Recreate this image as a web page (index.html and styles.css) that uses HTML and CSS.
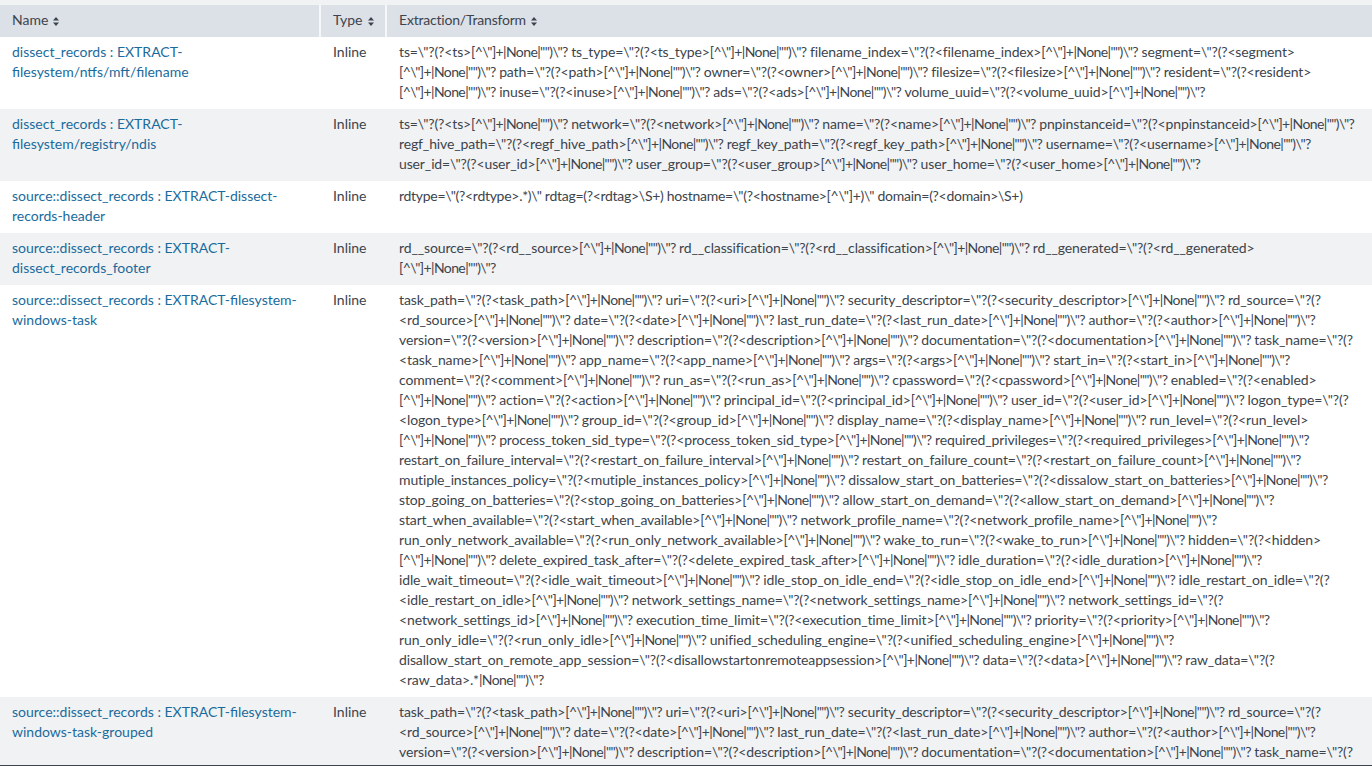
FILE: index.html
```html
<!DOCTYPE html>
<html lang="en">
<head>
<meta charset="utf-8">
<title>Extractions</title>
<link rel="stylesheet" href="styles.css">
</head>
<body>
<table class="fields">
<colgroup><col class="col-name"><col class="col-type"><col class="col-expr"></colgroup>
<thead>
<tr>
<th>Name<svg class="sort" viewBox="0 0 6 9" width="6" height="9"><path d="M3 0 6 3.6H0zM3 9 0 5.4h6z"/></svg></th>
<th>Type<svg class="sort" viewBox="0 0 6 9" width="6" height="9"><path d="M3 0 6 3.6H0zM3 9 0 5.4h6z"/></svg></th>
<th class="expr-head">Extraction/Transform<svg class="sort" viewBox="0 0 6 9" width="6" height="9"><path d="M3 0 6 3.6H0zM3 9 0 5.4h6z"/></svg></th>
</tr>
</thead>
<tbody>
<tr>
<td><a href="#">dissect_records : EXTRACT-<br>filesystem/ntfs/mft/filename</a></td>
<td>Inline</td>
<td class="expr">ts=\"?(?&lt;ts&gt;<span class="alt">[^\"]+|None|"")\"?</span> ts_type=\"?(?&lt;ts_type&gt;<span class="alt">[^\"]+|None|"")\"?</span> filename_index=\"?(?&lt;filename_index&gt;<span class="alt">[^\"]+|None|"")\"?</span> segment=\"?(?&lt;segment&gt;<br>
<span class="alt">[^\"]+|None|"")\"?</span> path=\"?(?&lt;path&gt;<span class="alt">[^\"]+|None|"")\"?</span> owner=\"?(?&lt;owner&gt;<span class="alt">[^\"]+|None|"")\"?</span> filesize=\"?(?&lt;filesize&gt;<span class="alt">[^\"]+|None|"")\"?</span> resident=\"?(?&lt;resident&gt;<br>
<span class="alt">[^\"]+|None|"")\"?</span> inuse=\"?(?&lt;inuse&gt;<span class="alt">[^\"]+|None|"")\"?</span> ads=\"?(?&lt;ads&gt;<span class="alt">[^\"]+|None|"")\"?</span> volume_uuid=\"?(?&lt;volume_uuid&gt;<span class="alt">[^\"]+|None|"")\"?</span></td>
</tr>
<tr>
<td><a href="#">dissect_records : EXTRACT-<br>filesystem/registry/ndis</a></td>
<td>Inline</td>
<td class="expr">ts=\"?(?&lt;ts&gt;<span class="alt">[^\"]+|None|"")\"?</span> network=\"?(?&lt;network&gt;<span class="alt">[^\"]+|None|"")\"?</span> name=\"?(?&lt;name&gt;<span class="alt">[^\"]+|None|"")\"?</span> pnpinstanceid=\"?(?&lt;pnpinstanceid&gt;<span class="alt">[^\"]+|None|"")\"?</span><br>
regf_hive_path=\"?(?&lt;regf_hive_path&gt;<span class="alt">[^\"]+|None|"")\"?</span> regf_key_path=\"?(?&lt;regf_key_path&gt;<span class="alt">[^\"]+|None|"")\"?</span> username=\"?(?&lt;username&gt;<span class="alt">[^\"]+|None|"")\"?</span><br>
user_id=\"?(?&lt;user_id&gt;<span class="alt">[^\"]+|None|"")\"?</span> user_group=\"?(?&lt;user_group&gt;<span class="alt">[^\"]+|None|"")\"?</span> user_home=\"?(?&lt;user_home&gt;<span class="alt">[^\"]+|None|"")\"?</span></td>
</tr>
<tr>
<td><a href="#">source::dissect_records : EXTRACT-dissect-<br>records-header</a></td>
<td>Inline</td>
<td class="expr tight">rdtype=\"(?&lt;rdtype&gt;.*)\" rdtag=(?&lt;rdtag&gt;\S+) hostname=\"(?&lt;hostname&gt;[^\"]+)\" domain=(?&lt;domain&gt;\S+)</td>
</tr>
<tr>
<td><a href="#">source::dissect_records : EXTRACT-<br>dissect_records_footer</a></td>
<td>Inline</td>
<td class="expr">rd__source=\"?(?&lt;rd__source&gt;<span class="alt">[^\"]+|None|"")\"?</span> rd__classification=\"?(?&lt;rd__classification&gt;<span class="alt">[^\"]+|None|"")\"?</span> rd__generated=\"?(?&lt;rd__generated&gt;<br>
<span class="alt">[^\"]+|None|"")\"?</span></td>
</tr>
<tr>
<td><a href="#">source::dissect_records : EXTRACT-filesystem-<br>windows-task</a></td>
<td>Inline</td>
<td class="expr">task_path=\"?(?&lt;task_path&gt;<span class="alt">[^\"]+|None|"")\"?</span> uri=\"?(?&lt;uri&gt;<span class="alt">[^\"]+|None|"")\"?</span> security_descriptor=\"?(?&lt;security_descriptor&gt;<span class="alt">[^\"]+|None|"")\"?</span> rd_source=\"?(?<br>
&lt;rd_source&gt;<span class="alt">[^\"]+|None|"")\"?</span> date=\"?(?&lt;date&gt;<span class="alt">[^\"]+|None|"")\"?</span> last_run_date=\"?(?&lt;last_run_date&gt;<span class="alt">[^\"]+|None|"")\"?</span> author=\"?(?&lt;author&gt;<span class="alt">[^\"]+|None|"")\"?</span><br>
version=\"?(?&lt;version&gt;<span class="alt">[^\"]+|None|"")\"?</span> description=\"?(?&lt;description&gt;<span class="alt">[^\"]+|None|"")\"?</span> documentation=\"?(?&lt;documentation&gt;<span class="alt">[^\"]+|None|"")\"?</span> task_name=\"?(?<br>
&lt;task_name&gt;<span class="alt">[^\"]+|None|"")\"?</span> app_name=\"?(?&lt;app_name&gt;<span class="alt">[^\"]+|None|"")\"?</span> args=\"?(?&lt;args&gt;<span class="alt">[^\"]+|None|"")\"?</span> start_in=\"?(?&lt;start_in&gt;<span class="alt">[^\"]+|None|"")\"?</span><br>
comment=\"?(?&lt;comment&gt;<span class="alt">[^\"]+|None|"")\"?</span> run_as=\"?(?&lt;run_as&gt;<span class="alt">[^\"]+|None|"")\"?</span> cpassword=\"?(?&lt;cpassword&gt;<span class="alt">[^\"]+|None|"")\"?</span> enabled=\"?(?&lt;enabled&gt;<br>
<span class="alt">[^\"]+|None|"")\"?</span> action=\"?(?&lt;action&gt;<span class="alt">[^\"]+|None|"")\"?</span> principal_id=\"?(?&lt;principal_id&gt;<span class="alt">[^\"]+|None|"")\"?</span> user_id=\"?(?&lt;user_id&gt;<span class="alt">[^\"]+|None|"")\"?</span> logon_type=\"?(?<br>
&lt;logon_type&gt;<span class="alt">[^\"]+|None|"")\"?</span> group_id=\"?(?&lt;group_id&gt;<span class="alt">[^\"]+|None|"")\"?</span> display_name=\"?(?&lt;display_name&gt;<span class="alt">[^\"]+|None|"")\"?</span> run_level=\"?(?&lt;run_level&gt;<br>
<span class="alt">[^\"]+|None|"")\"?</span> process_token_sid_type=\"?(?&lt;process_token_sid_type&gt;<span class="alt">[^\"]+|None|"")\"?</span> required_privileges=\"?(?&lt;required_privileges&gt;<span class="alt">[^\"]+|None|"")\"?</span><br>
restart_on_failure_interval=\"?(?&lt;restart_on_failure_interval&gt;<span class="alt">[^\"]+|None|"")\"?</span> restart_on_failure_count=\"?(?&lt;restart_on_failure_count&gt;<span class="alt">[^\"]+|None|"")\"?</span><br>
mutiple_instances_policy=\"?(?&lt;mutiple_instances_policy&gt;<span class="alt">[^\"]+|None|"")\"?</span> dissalow_start_on_batteries=\"?(?&lt;dissalow_start_on_batteries&gt;<span class="alt">[^\"]+|None|"")\"?</span><br>
stop_going_on_batteries=\"?(?&lt;stop_going_on_batteries&gt;<span class="alt">[^\"]+|None|"")\"?</span> allow_start_on_demand=\"?(?&lt;allow_start_on_demand&gt;<span class="alt">[^\"]+|None|"")\"?</span><br>
start_when_available=\"?(?&lt;start_when_available&gt;<span class="alt">[^\"]+|None|"")\"?</span> network_profile_name=\"?(?&lt;network_profile_name&gt;<span class="alt">[^\"]+|None|"")\"?</span><br>
run_only_network_available=\"?(?&lt;run_only_network_available&gt;<span class="alt">[^\"]+|None|"")\"?</span> wake_to_run=\"?(?&lt;wake_to_run&gt;<span class="alt">[^\"]+|None|"")\"?</span> hidden=\"?(?&lt;hidden&gt;<br>
<span class="alt">[^\"]+|None|"")\"?</span> delete_expired_task_after=\"?(?&lt;delete_expired_task_after&gt;<span class="alt">[^\"]+|None|"")\"?</span> idle_duration=\"?(?&lt;idle_duration&gt;<span class="alt">[^\"]+|None|"")\"?</span><br>
idle_wait_timeout=\"?(?&lt;idle_wait_timeout&gt;<span class="alt">[^\"]+|None|"")\"?</span> idle_stop_on_idle_end=\"?(?&lt;idle_stop_on_idle_end&gt;<span class="alt">[^\"]+|None|"")\"?</span> idle_restart_on_idle=\"?(?<br>
&lt;idle_restart_on_idle&gt;<span class="alt">[^\"]+|None|"")\"?</span> network_settings_name=\"?(?&lt;network_settings_name&gt;<span class="alt">[^\"]+|None|"")\"?</span> network_settings_id=\"?(?<br>
&lt;network_settings_id&gt;<span class="alt">[^\"]+|None|"")\"?</span> execution_time_limit=\"?(?&lt;execution_time_limit&gt;<span class="alt">[^\"]+|None|"")\"?</span> priority=\"?(?&lt;priority&gt;<span class="alt">[^\"]+|None|"")\"?</span><br>
run_only_idle=\"?(?&lt;run_only_idle&gt;<span class="alt">[^\"]+|None|"")\"?</span> unified_scheduling_engine=\"?(?&lt;unified_scheduling_engine&gt;<span class="alt">[^\"]+|None|"")\"?</span><br>
disallow_start_on_remote_app_session=\"?(?&lt;disallowstartonremoteappsession&gt;<span class="alt">[^\"]+|None|"")\"?</span> data=\"?(?&lt;data&gt;<span class="alt">[^\"]+|None|"")\"?</span> raw_data=\"?(?<br>
&lt;raw_data&gt;.*<span class="alt">|None|"")\"?</span></td>
</tr>
<tr>
<td><a href="#">source::dissect_records : EXTRACT-filesystem-<br>windows-task-grouped</a></td>
<td>Inline</td>
<td class="expr">task_path=\"?(?&lt;task_path&gt;<span class="alt">[^\"]+|None|"")\"?</span> uri=\"?(?&lt;uri&gt;<span class="alt">[^\"]+|None|"")\"?</span> security_descriptor=\"?(?&lt;security_descriptor&gt;<span class="alt">[^\"]+|None|"")\"?</span> rd_source=\"?(?<br>
&lt;rd_source&gt;<span class="alt">[^\"]+|None|"")\"?</span> date=\"?(?&lt;date&gt;<span class="alt">[^\"]+|None|"")\"?</span> last_run_date=\"?(?&lt;last_run_date&gt;<span class="alt">[^\"]+|None|"")\"?</span> author=\"?(?&lt;author&gt;<span class="alt">[^\"]+|None|"")\"?</span><br>
version=\"?(?&lt;version&gt;<span class="alt">[^\"]+|None|"")\"?</span> description=\"?(?&lt;description&gt;<span class="alt">[^\"]+|None|"")\"?</span> documentation=\"?(?&lt;documentation&gt;<span class="alt">[^\"]+|None|"")\"?</span> task_name=\"?(?</td>
</tr>
</tbody>
</table>
<div class="page-edge"></div>
</body>
</html>
```
FILE: styles.css
```css
html, body {
  margin: 0;
  height: 766px;
  overflow: hidden;
  background: #f1f2f4;
}
body {
  padding-top: 5px;
  box-sizing: border-box;
  font-family: Lato, "Liberation Sans", sans-serif;
  font-size: 14px;
  line-height: 20px;
  color: #3c444d;
}
.fields {
  width: 1372px;
  table-layout: fixed;
  border-collapse: collapse;
}
.col-name { width: 320px; }
.col-type { width: 66px; }
.col-expr { width: 986px; }
th {
  height: 32px;
  box-sizing: border-box;
  padding: 0 12px 2px;
  background: #dce0e7;
  font-weight: 400;
  text-align: left;
  white-space: nowrap;
}
th + th { border-left: 2px solid #f6f7f8; }
.expr-head { letter-spacing: -.2px; }
.sort { fill: #3c444d; margin-left: 5px; vertical-align: -1px; }
td {
  padding: 5px 12px 7px;
  vertical-align: top;
  white-space: nowrap;
  overflow: hidden;
}
td + td { padding-left: 13px; }
.expr { letter-spacing: -.13px; }
.expr.tight { letter-spacing: -.28px; }
.alt { letter-spacing: -.6px; }
tbody tr:nth-child(odd) { background: #fff; }
tbody tr:nth-child(even) { background: #f1f2f4; }
a { color: #1a6b9c; text-decoration: none; }
.page-edge {
  position: fixed;
  left: 0;
  right: 0;
  bottom: 0;
  height: 1px;
  background: #3c444d;
}
```
